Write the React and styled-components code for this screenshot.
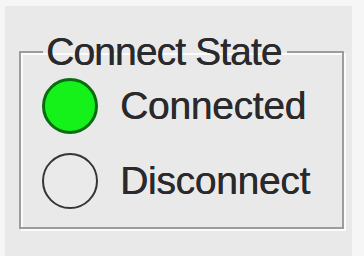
import React from "react";
import styled, { createGlobalStyle } from "styled-components";

const Global = createGlobalStyle`
  html, body {
    margin: 0;
    padding: 0;
    background: #f6f6f6;
  }
  body {
    font-family: "Liberation Sans", Arial, sans-serif;
  }
`;

const Screen = styled.div`
  width: 364px;
  height: 256px;
  padding: 6px 12px 0 5px;
  box-sizing: border-box;
  overflow: hidden;
`;

const Panel = styled.div`
  height: 100%;
  background: #e9e9e9;
  padding: 26px 8px 0 14px;
  box-sizing: border-box;
`;

const Group = styled.fieldset`
  margin: 0;
  padding: 6px 20px 18px 21px;
  border: 2px solid #9c9c9c;
  box-shadow: 2px 2px 0 #fbfbfb, inset 2px 2px 0 #fbfbfb;
  display: flex;
  flex-direction: column;
  gap: 19px;
`;

const Legend = styled.legend`
  margin-left: 1px;
  padding: 0 6px 0 3px;
  font-size: 39px;
  line-height: 40px;
  letter-spacing: -0.9px;
  color: #2a2a2c;
  text-shadow: 0.4px 0 0 #2a2a2c;
`;

const Row = styled.div`
  display: flex;
  align-items: center;
  gap: 22px;
`;

const Lamp = styled.span`
  width: 56px;
  height: 56px;
  border-radius: 50%;
  box-sizing: border-box;
  border: ${(p) => (p.$on ? "3px solid #0b6b12" : "2.5px solid #353535")};
  background: ${(p) => (p.$on ? "#14f21a" : "#eaeaea")};
  flex: none;
`;

const Label = styled.span`
  font-size: 39px;
  line-height: 56px;
  letter-spacing: -0.3px;
  color: #2a2a2c;
  text-shadow: 0.4px 0 0 #2a2a2c;
`;

export default function App() {
  const states = [
    { name: "Connected", on: true },
    { name: "Disconnect", on: false },
  ];
  return (
    <Screen>
      <Global />
      <Panel>
        <Group>
          <Legend>Connect State</Legend>
          {states.map((s) => (
            <Row key={s.name}>
              <Lamp $on={s.on} />
              <Label>{s.name}</Label>
            </Row>
          ))}
        </Group>
      </Panel>
    </Screen>
  );
}
